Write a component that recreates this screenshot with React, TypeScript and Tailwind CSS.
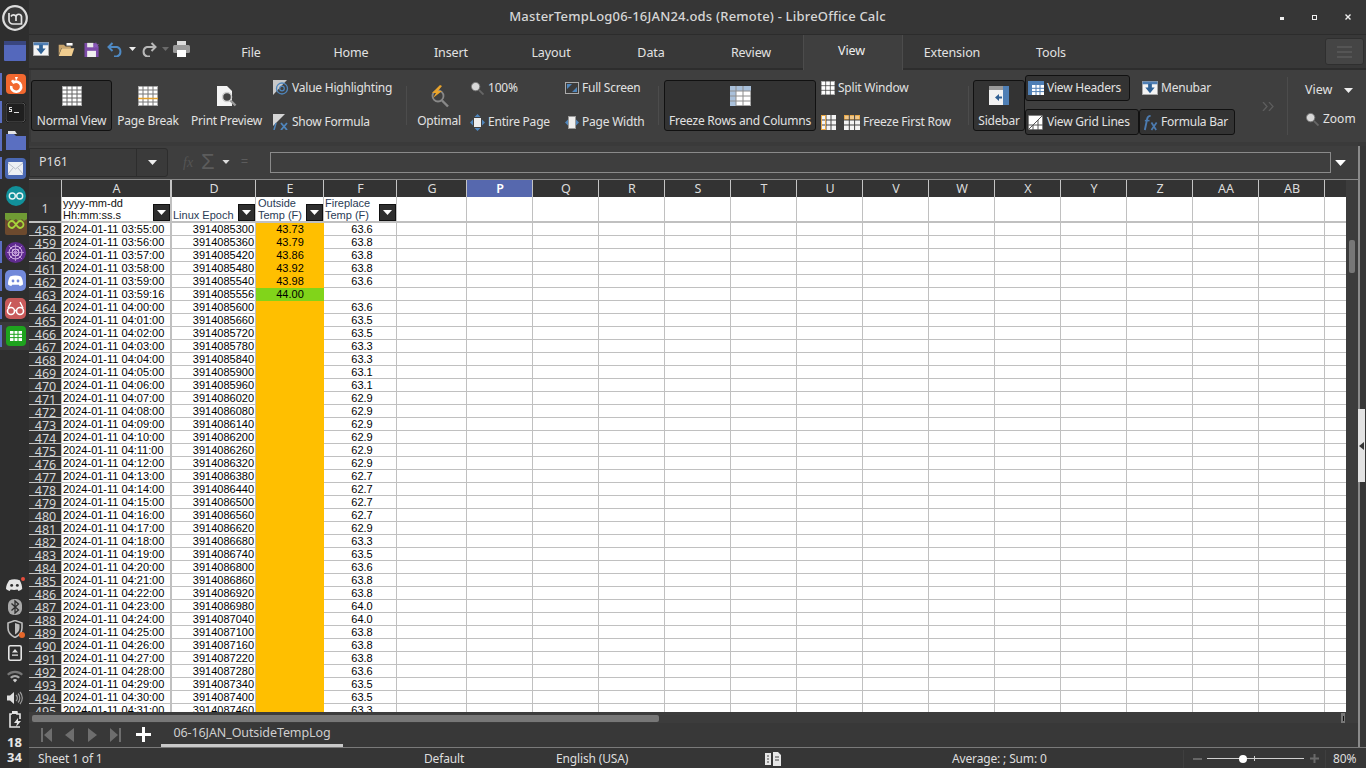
import React from "react";

const UI = "font-['Noto_Sans',sans-serif]";
const CELL = "font-['Liberation_Sans',sans-serif]";

const GridIcon = ({ s = 16, c = 5, r = 5, fill = "#fff", line = "#555", className = "" }: any) => (
  <svg width={s} height={s} viewBox="0 0 20 20" className={className}>
    <rect x="0.5" y="0.5" width="19" height="19" fill={fill} stroke="#aaa" />
    {Array.from({ length: c - 1 }).map((_, i) => (
      <line key={i} x1={((i + 1) * 20) / c} x2={((i + 1) * 20) / c} y1="0" y2="20" stroke={line} />
    ))}
    {Array.from({ length: r - 1 }).map((_, i) => (
      <line key={i} y1={((i + 1) * 20) / r} y2={((i + 1) * 20) / r} x1="0" x2="20" stroke={line} />
    ))}
  </svg>
);

const Caret = ({ c = "#eee", w = 9, h = 5 }: any) => (
  <svg width={w} height={h} viewBox="0 0 9 5" className="shrink-0">
    <path d="M0 0h9L4.5 5z" fill={c} />
  </svg>
);

const MenubarIcon = ({ s = 16, h = 14 }: any) => (
  <svg width={s} height={h} viewBox="0 0 17 15" className="shrink-0">
    <rect x="0.5" y="0.5" width="16" height="14" fill="#f4f4f4" stroke="#aaa" />
    <rect x="0.5" y="0.5" width="16" height="3" fill="#4f7fb5" />
    <path d="M6.5 3v4H3.5l5 6 5-6h-3V3z" fill="#2f6296" />
  </svg>
);

const FxIcon = ({ s = 20 }: any) => (
  <svg width={s} height={s} viewBox="0 0 18 18" className="shrink-0">
    <path d="M3 17 5.5 5c.4-2 1.5-3 3.6-3" fill="none" stroke="#4c7bb0" strokeWidth="2" />
    <path d="M3 7h5" stroke="#4c7bb0" strokeWidth="1.6" />
    <path d="M10 9l5 8M15.5 9l-5.5 8" stroke="#4c7bb0" strokeWidth="1.8" />
  </svg>
);

const SmallMag = ({ s = 15 }: any) => (
  <svg width={s} height={s} viewBox="0 0 15 15" className="shrink-0">
    <circle cx="6" cy="6" r="4.5" fill="#d8d8d8" stroke="#777" />
    <path d="M9.5 9.5l5 5" stroke="#666" strokeWidth="2" />
  </svg>
);

const LABEL = "text-[12px] tracking-[-0.22px] whitespace-nowrap text-[#e2e2e2]";

function Big({ w, ml = 0, label, icon, boxed = false }: any) {
  return (
    <div
      style={{ width: w, marginLeft: ml }}
      className={`shrink-0 mt-[10px] h-[51px] flex flex-col items-center rounded-[3px] ${
        boxed ? "bg-[#333333] border border-[#111111]" : "border border-transparent"
      }`}
    >
      <div className="h-[29px] flex items-center justify-center">{icon}</div>
      <span className={`${LABEL} leading-[16px] mt-[3px]`}>{label}</span>
    </div>
  );
}

function Small({ icon, label, boxed = false, w, iconW = 19 }: any) {
  return (
    <div
      style={w ? { width: w } : undefined}
      className={`h-[26px] flex items-center rounded-[3px] shrink-0 ${
        boxed ? "bg-[#333333] border border-[#111111] pl-[2px]" : "border border-transparent"
      }`}
    >
      <span style={{ width: iconW }} className="shrink-0 flex items-center">
        {icon}
      </span>
      <span className={LABEL}>{label}</span>
    </div>
  );
}

const Sep = ({ ml }: any) => <div style={{ marginLeft: ml }} className="w-px h-[39px] mt-[16px] bg-[#4c4c4c] shrink-0" />;

function SmallCol({ ml = 0, w, children }: any) {
  return (
    <div style={{ marginLeft: ml, width: w }} className="shrink-0 mt-[5px] flex flex-col gap-[8px]">
      {children}
    </div>
  );
}

const colDefs = [
  ["A", 110],
  ["D", 84],
  ["E", 68],
  ["F", 73],
  ["G", 70],
  ["P", 66],
  ["Q", 66],
  ["R", 66],
  ["S", 66],
  ["T", 66],
  ["U", 66],
  ["V", 66],
  ["W", 66],
  ["X", 66],
  ["Y", 66],
  ["Z", 66],
  ["AA", 66],
  ["AB", 66],
] as [string, number][];

const times = ["03:55:00","03:56:00","03:57:00","03:58:00","03:59:00","03:59:16","04:00:00","04:01:00","04:02:00","04:03:00","04:04:00","04:05:00","04:06:00","04:07:00","04:08:00","04:09:00","04:10:00","04:11:00","04:12:00","04:13:00","04:14:00","04:15:00","04:16:00","04:17:00","04:18:00","04:19:00","04:20:00","04:21:00","04:22:00","04:23:00","04:24:00","04:25:00","04:26:00","04:27:00","04:28:00","04:29:00","04:30:00","04:31:00"];
const epochs = [85300,85360,85420,85480,85540,85556,85600,85660,85720,85780,85840,85900,85960,86020,86080,86140,86200,86260,86320,86380,86440,86500,86560,86620,86680,86740,86800,86860,86920,86980,87040,87100,87160,87220,87280,87340,87400,87460];
const outside = ["43.73","43.79","43.86","43.92","43.98","44.00"];
const fire = ["63.6","63.8","63.8","63.8","63.6","","63.6","63.5","63.5","63.3","63.3","63.1","63.1","62.9","62.9","62.9","62.9","62.9","62.9","62.7","62.7","62.7","62.7","62.9","63.3","63.5","63.6","63.8","63.8","64.0","64.0","63.8","63.8","63.8","63.6","63.5","63.5","63.3"];

const Filter = () => (
  <span className="absolute right-0 bottom-0 w-[17px] h-[17px] bg-[#2e2e2e] border border-[#111] flex items-center justify-center">
    <Caret c="#fff" w={9} h={5} />
  </span>
);

function Row({ i }: { i: number }) {
  const n = 458 + i;
  const blank = colDefs.slice(4);
  const green = i === 5;
  return (
    <div className={`flex h-[13px] ${CELL} text-[11px] leading-[12px] text-black`}>
      <div className={`${UI} w-[33px] shrink-0 h-[13px] overflow-hidden bg-[#343434] text-[12.5px] leading-[13px] pt-[1px] text-[#d5d5d5] text-center border-b border-b-[#c4c4c4] border-r border-r-[#c4c4c4] pl-[1px]`}>
        {n}
      </div>
      <div className="w-[110px] shrink-0 border-b border-r-[2px] border-[#c0c0c0] pl-[1px] whitespace-nowrap overflow-hidden">
        2024-01-11 {times[i]}
      </div>
      <div className="w-[84px] shrink-0 border-b border-r border-[#c0c0c0] text-right pr-[1px]">39140{epochs[i]}</div>
      <div className={`w-[68px] shrink-0 text-center ${green ? "bg-[#81d41a]" : "bg-[#ffbf00]"}`}>{outside[i] ?? ""}</div>
      <div className="w-[73px] shrink-0 border-b border-r border-[#c0c0c0] text-center pl-[4px]">{fire[i]}</div>
      {blank.map(([k, w]) => (
        <div key={k} style={{ width: w }} className="shrink-0 border-b border-r border-[#c0c0c0]" />
      ))}
      <div className="w-[21px] shrink-0 border-b border-[#c0c0c0]" />
    </div>
  );
}

const DockSlot = ({ active, children, h = 28 }: any) => (
  <div style={{ height: h }} className="w-full flex items-center justify-center relative pl-[2px]">
    {active && <span className="absolute left-0 top-[3px] bottom-[3px] w-[2px] bg-[#5b6fc2]" />}
    {children}
  </div>
);

function Dock() {
  return (
    <aside className={`${UI} w-[29px] shrink-0 h-[768px] bg-[#2e2e2e] flex flex-col items-center overflow-hidden`}>
      <div className="h-[34px] flex items-center justify-center pt-[1px]">
        <svg width="26" height="26" viewBox="0 0 26 26">
          <circle cx="13" cy="13" r="11.800" fill="#3a3a3a" stroke="#dcdcdc" strokeWidth="2.200" />
          <path d="M7 8v7a4 4 0 0 0 4 4h8.500v-7.500a2.800 2.800 0 0 0-5.500 0v4.500m0-4.500a2.800 2.800 0 0 0-5 0" fill="none" stroke="#e4e4e4" strokeWidth="1.700" />
        </svg>
      </div>
      <div className="h-[33px] flex items-center justify-center">
        <svg width="22" height="20" viewBox="0 0 22 20">
          <rect width="22" height="20" rx="1" fill="#5468bc" />
          <rect width="22" height="4" fill="#39467f" />
        </svg>
      </div>
      <div className="h-[3px]" />
      <DockSlot active>
        <svg width="20" height="20" viewBox="0 0 20 20">
          <rect width="20" height="20" rx="4" fill="#f2682f" />
          <path d="M6 6.200l1.600 2.200A5 5 0 1 1 5.200 12" fill="none" stroke="#fff" strokeWidth="2.600" />
          <path d="M9 3h3l-2 4z" fill="#fff" />
        </svg>
      </DockSlot>
      <DockSlot active>
        <svg width="21" height="21" viewBox="0 0 21 21">
          <rect x="0.500" y="0.500" width="20" height="20" rx="4" fill="#1f1f1f" stroke="#000" />
          <rect x="1" y="1" width="19" height="19" rx="3" fill="none" stroke="#555" />
          <path d="M4 5h3v1H5v1h2v3H4V9h2V8H4zM9 10h5v1H9z" fill="#ddd" />
        </svg>
      </DockSlot>
      <DockSlot active>
        <svg width="22" height="19" viewBox="0 0 22 19">
          <path d="M1 3h8l2 2h10v14H1z" fill="#5a6fc1" />
          <path d="M3 0h7l2 3H3z" fill="#e4e4e4" />
        </svg>
      </DockSlot>
      <DockSlot active>
        <svg width="21" height="21" viewBox="0 0 21 21">
          <rect width="21" height="21" rx="4" fill="#4a68b3" />
          <rect x="3" y="4" width="15" height="13" rx="1" fill="#eceff4" />
          <path d="M3 5l7.500 6L18 5M3 16l5-6M18 16l-5-6" fill="none" stroke="#b9bec9" />
        </svg>
      </DockSlot>
      <DockSlot>
        <svg width="20" height="20" viewBox="0 0 20 20">
          <circle cx="10" cy="10" r="10" fill="#11909a" />
          <circle cx="6.300" cy="10" r="3" fill="none" stroke="#e8f4f4" strokeWidth="1.400" />
          <circle cx="13.700" cy="10" r="3" fill="none" stroke="#e8f4f4" strokeWidth="1.400" />
        </svg>
      </DockSlot>
      <DockSlot>
        <svg width="22" height="22" viewBox="0 0 22 22">
          <rect width="22" height="22" rx="2" fill="#6d4a2e" />
          <path d="M0 0h22v6l-3 2-2-2-3 3-3-3-3 2-3-2-2 2-3-2z" fill="#6f9b34" />
          <path d="M7 8a3.500 3.500 0 1 0 0 7c3 0 5-7 8-7a3.500 3.500 0 1 1 0 7C12 15 10 8 7 8z" fill="none" stroke="#a7d43c" strokeWidth="1.800" />
        </svg>
      </DockSlot>
      <DockSlot active>
        <svg width="21" height="21" viewBox="0 0 21 21">
          <circle cx="10.500" cy="10.500" r="10.500" fill="#5f2b8f" />
          <circle cx="10.500" cy="10.500" r="6.500" fill="none" stroke="#d7b7e8" />
          <circle cx="10.500" cy="10.500" r="3.500" fill="none" stroke="#e5d0ef" />
          <path d="M4 4l13 13M17 4 4 17M10.500 2v17M2 10.500h17" stroke="#c79ddc" strokeWidth="0.800" />
        </svg>
      </DockSlot>
      <DockSlot active>
        <svg width="21" height="21" viewBox="0 0 21 21">
          <rect width="21" height="21" rx="5" fill="#7289da" />
          <path d="M5 6.500c3.500-1.500 7.500-1.500 11 0 1.500 2.500 2 5 2 8-1 .8-2.200 1.300-3.300 1.500l-.9-1.300H7.200l-.9 1.300C5.200 15.800 4 15.300 3 14.500c0-3 .5-5.500 2-8z" fill="#fff" />
          <circle cx="8" cy="11" r="1.400" fill="#7289da" />
          <circle cx="13" cy="11" r="1.400" fill="#7289da" />
        </svg>
      </DockSlot>
      <DockSlot active>
        <svg width="21" height="21" viewBox="0 0 21 21">
          <rect width="21" height="21" rx="5" fill="#c95a5a" />
          <circle cx="6" cy="13" r="3.500" fill="none" stroke="#fff" strokeWidth="1.600" />
          <circle cx="15" cy="13" r="3.500" fill="none" stroke="#fff" strokeWidth="1.600" />
          <path d="M9.500 12.500h2M3 10l3-6M18 10l-3-6" stroke="#fff" strokeWidth="1.400" />
        </svg>
      </DockSlot>
      <div className="w-full bg-[#3a3a3a]">
        <DockSlot active>
          <svg width="20" height="20" viewBox="0 0 20 20">
            <rect width="20" height="20" rx="4" fill="#1ea31e" />
            <rect x="4" y="5" width="12" height="10" fill="#fff" />
            <path d="M4 8.300h12M4 11.600h12M8 5v10M12 5v10" stroke="#1ea31e" />
          </svg>
        </DockSlot>
      </div>
      <div className="flex-1" />
      <div className="flex flex-col items-center">
        <div className="h-[23px] flex items-center justify-center relative">
          <svg width="17" height="14" viewBox="0 0 21 16">
            <path d="M4 2c3.800-1.600 9.200-1.600 13 0 2 3.500 3 7 3 11-1.400 1.200-3 2-4.600 2.300l-1.100-1.800c-3.200.7-5.400.7-8.600 0l-1.100 1.800C3 15 1.400 14.200 0 13c0-4 1.500-7.500 4-11z" fill="#e4e4e4" />
            <circle cx="7" cy="8.500" r="1.800" fill="#2e2e2e" />
            <circle cx="14" cy="8.500" r="1.800" fill="#2e2e2e" />
          </svg>
          <span className="absolute top-[4px] right-[-2px] w-[4px] h-[4px] rounded-full bg-[#e74c3c]" />
        </div>
        <div className="h-[22px] flex items-center justify-center">
          <svg width="14" height="16" viewBox="0 0 14 16">
            <rect width="14" height="16" rx="6" fill="#a9a9a9" />
            <path d="M3.500 4.500l7 6.500L7 14V2l3.500 3-7 6.500" fill="none" stroke="#2e2e2e" strokeWidth="1.300" />
          </svg>
        </div>
        <div className="h-[22px] flex items-center justify-center relative">
          <svg width="16" height="18" viewBox="0 0 16 18">
            <path d="M8 0.500l7 2.500v5c0 4.500-3 7.500-7 9.500-4-2-7-5-7-9.500V3z" fill="none" stroke="#bdbdbd" strokeWidth="1.600" />
            <path d="M8 3l4.500 1.500V8c0 3-2 5-4.500 6.500z" fill="#bdbdbd" />
          </svg>
          <span className="absolute bottom-[2px] right-[-2px] w-[6px] h-[6px] rounded-full bg-[#e6672a]" />
        </div>
        <div className="h-[25px] flex items-center justify-center">
          <svg width="14" height="16" viewBox="0 0 14 16">
            <rect x="0.800" y="0.800" width="12.400" height="14.400" rx="1.500" fill="none" stroke="#e4e4e4" strokeWidth="1.600" />
            <path d="M7 4l3 3.500H4zM4 9.500h6v1.300H4z" fill="#e4e4e4" />
          </svg>
        </div>
        <div className="h-[23px] flex items-center justify-center">
          <svg width="16" height="13" viewBox="0 0 16 13">
            <path d="M0 4a11.500 11.500 0 0 1 16 0l-1.500 1.600a9.500 9.500 0 0 0-13 0z" fill="#777" />
            <path d="M3 7a7.500 7.500 0 0 1 10 0l-1.500 1.500a5.300 5.300 0 0 0-7 0z" fill="#a8a8a8" />
            <path d="M5.800 10a3.500 3.500 0 0 1 4.400 0L8 12.500z" fill="#cfcfcf" />
          </svg>
        </div>
        <div className="h-[20px] flex items-center justify-center">
          <svg width="16" height="14" viewBox="0 0 16 14">
            <path d="M0 4.500h3L7 1v12L3 9.500H0z" fill="#dedede" />
            <path d="M9 4a4 4 0 0 1 0 6M11 2.500a6.500 6.500 0 0 1 0 9M13 1a9 9 0 0 1 0 12" fill="none" stroke="#9d9d9d" strokeWidth="1.200" />
          </svg>
        </div>
        <div className="h-[22px] flex items-center justify-center">
          <svg width="14" height="18" viewBox="0 0 14 18">
            <path d="M4 2h5v2h3v5M12 17H2V4h2" fill="none" stroke="#e4e4e4" strokeWidth="1.600" />
            <path d="M4 1h5v3H4z" fill="#e4e4e4" />
            <path d="M10 8l-4 5h3l-1 4 5-6h-3z" fill="#e4e4e4" />
          </svg>
        </div>
        <div className="h-[15px] text-[13px] font-bold leading-[15px] text-[#e6e6e6] mt-[5px]">18</div>
        <div className="h-[15px] text-[13px] font-bold leading-[15px] text-[#e6e6e6] mb-[3px]">34</div>
      </div>
    </aside>
  );
}

const tabWidths: Record<string, string> = {
  File: "w-[100px]",
  Home: "w-[100px]",
  Insert: "w-[100px]",
  Layout: "w-[100px]",
  Data: "w-[100px]",
  Review: "w-[102px] pr-[2px]",
  View: "w-[100px]",
  Extension: "w-[98px]",
  Tools: "w-[100px]",
};
const tabs = Object.keys(tabWidths);

function TabBar() {
  return (
    <div className="h-[36px] flex bg-[#383838] border-t border-[#2c2c2c] border-b-[2px] border-b-[#2d2d2d] items-stretch">
      <div className="w-[172px] shrink-0 flex items-center pl-[4px] pb-[5px]">
        <MenubarIcon />
        <svg width="17" height="13" viewBox="0 0 18 15" className="ml-[9px] shrink-0">
          <path d="M0 2h6l2 2h6v2H3L0 14z" fill="#c8a46c" />
          <path d="M3.500 6H18l-3 9H0z" fill="#f0cd8f" />
          <path d="M9 0h7v3H9z" fill="#fff" />
        </svg>
        <svg width="16" height="15" viewBox="0 0 17 17" className="ml-[9px] shrink-0">
          <path d="M0 1h12l4 4v12H0z" fill="#7c4aa8" />
          <rect x="3" y="1" width="7" height="5" fill="#e8e8e8" />
          <rect x="3" y="10" width="10" height="7" fill="#f0f0f0" />
          <path d="M13 0l1 2.500 2.500.2-2 1.700.7 2.600-2.200-1.400-2.200 1.400.7-2.600-2-1.700 2.500-.2z" fill="#8a5bb8" />
        </svg>
        <svg width="17" height="15" viewBox="0 0 17 15" className="ml-[7px] shrink-0">
          <path d="M5.500 1 1.500 5l4 4" fill="none" stroke="#4f8ac4" strokeWidth="2" />
          <path d="M2 5h8a5 5 0 0 1 0 9.500H7" fill="none" stroke="#4f8ac4" strokeWidth="2" />
        </svg>
        <span className="ml-[5px]"><Caret c="#eee" w={7} h={4} /></span>
        <svg width="17" height="15" viewBox="0 0 17 15" className="ml-[4px] shrink-0">
          <path d="M11.500 1l4 4-4 4" fill="none" stroke="#b8b8b8" strokeWidth="2" />
          <path d="M15 5H7a5 5 0 0 0 0 9.500h3" fill="none" stroke="#b8b8b8" strokeWidth="2" />
        </svg>
        <span className="ml-[5px]"><Caret c="#6a6a6a" w={7} h={4} /></span>
        <svg width="17" height="16" viewBox="0 0 17 16" className="ml-[4px] shrink-0">
          <rect x="4" y="0" width="9" height="4" fill="#ddd" />
          <rect x="0" y="4" width="17" height="8" rx="1.500" fill="#9a9a9a" />
          <rect x="4" y="9" width="9" height="7" fill="#fff" />
        </svg>
      </div>
      {tabs.map((t) => (
        <div
          key={t}
          className={`${tabWidths[t]} shrink-0 flex items-center justify-center text-[12.5px] tracking-[-0.1px] ${
            t === "View"
              ? "bg-[#3f3f3f] text-[#efefef] border-l border-r border-[#4c4c4c] -mb-[2px] pb-[3px] pr-[3px]"
              : "text-[#e2e2e2] pt-[3px]"
          }`}
        >
          {t}
        </div>
      ))}
      <div className="flex-1" />
      <div className="w-[39px] h-[27px] mt-[3px] mr-[2px] rounded-[3px] bg-[#454545] border border-[#2f2f2f] flex flex-col items-center justify-center gap-[3px]">
        <span className="w-[15px] h-[2px] bg-[#555]" />
        <span className="w-[15px] h-[2px] bg-[#555]" />
        <span className="w-[15px] h-[2px] bg-[#555]" />
      </div>
    </div>
  );
}

function Ribbon() {
  return (
    <div className="h-[72px] flex bg-[#3f3f3f] ml-[2px] overflow-hidden">
      <Big w={81} label="Normal View" boxed icon={<GridIcon s={20} c={4} r={5} line="#666" />} />
      <Big
        w={72}
        label="Page Break"
        icon={
          <svg width="20" height="20" viewBox="0 0 20 20">
            <rect x="0.500" y="0.500" width="19" height="19" fill="#fff" stroke="#aaa" />
            <path d="M5 0v20M10 0v20M15 0v20M0 4h20M0 8h20M0 16h20" stroke="#777" />
            <path d="M0 12.500h20" stroke="#e0a030" strokeWidth="1.500" />
          </svg>
        }
      />
      <Big
        w={85}
        label="Print Preview"
        icon={
          <svg width="22" height="22" viewBox="0 0 22 22">
            <path d="M1 1h10l5 5v15H1z" fill="#f4f4f4" />
            <circle cx="11" cy="12" r="4.500" fill="#444" stroke="#cfcfcf" strokeWidth="1.500" />
            <path d="M14.500 15.500l5 5" stroke="#999" strokeWidth="2.400" />
          </svg>
        }
      />
      <SmallCol ml={3} w={127}>
        <Small
          label="Value Highlighting"
          icon={
            <svg width="16" height="16" viewBox="0 0 16 16">
              <path d="M0 0h14L0 15z" fill="#c9c9c9" />
              <circle cx="9" cy="8.500" r="5.500" fill="none" stroke="#4f86bd" strokeWidth="1.300" />
              <circle cx="9" cy="8.500" r="2.300" fill="none" stroke="#4f86bd" strokeWidth="1.200" />
            </svg>
          }
        />
        <Small
          label="Show Formula"
          icon={
            <svg width="16" height="16" viewBox="0 0 16 16">
              <path d="M0 0h12L0 12z" fill="#d5d5d5" />
              <path d="M1 16l2-7" stroke="#4f86bd" strokeWidth="1.500" />
              <path d="M8 9l6 7M14 9l-6 7" stroke="#4f86bd" strokeWidth="1.800" />
            </svg>
          }
        />
      </SmallCol>
      <Sep ml={7} />
      <Big
        w={52}
        ml={6}
        label="Optimal"
        icon={
          <svg width="22" height="24" viewBox="0 0 22 24">
            <circle cx="10" cy="12" r="5.500" fill="none" stroke="#888" strokeWidth="1.800" />
            <path d="M14 16.500l6 6" stroke="#888" strokeWidth="2.400" />
            <path d="M12 1 4 9h4l-3 5 9-7h-4l4-5z" fill="#e8a32c" />
          </svg>
        }
      />
      <SmallCol ml={4} w={94}>
        <Small label="100%" iconW={18} icon={<SmallMag s={14} />} />
        <Small
          label="Entire Page"
          iconW={18}
          icon={
            <svg width="15" height="17" viewBox="0 0 15 17">
              <rect x="4" y="4" width="7" height="9" fill="#eee" />
              <path d="M7.500 0l3 3h-6zM7.500 17l3-3h-6zM0 8.500l3-3v6zM15 8.500l-3-3v6z" fill="#4f86bd" />
            </svg>
          }
        />
      </SmallCol>
      <SmallCol ml={1} w={90}>
        <Small
          label="Full Screen"
          iconW={17}
          icon={
            <svg width="14" height="12" viewBox="0 0 14 12">
              <rect x="0.500" y="0.500" width="13" height="11" fill="#3b3b3b" stroke="#aaa" />
              <path d="M2 2h5L2 7zM12 10H7l5-5z" fill="#4f86bd" />
            </svg>
          }
        />
        <Small
          label="Page Width"
          iconW={17}
          icon={
            <svg width="14" height="13" viewBox="0 0 14 13">
              <rect x="3.500" y="0.500" width="7" height="12" fill="#eee" stroke="#999" />
              <path d="M0 6.500l3-3v6zM14 6.500l-3-3v6z" fill="#4f86bd" />
            </svg>
          }
        />
      </SmallCol>
      <Sep ml={4} />
      <Big
        w={152}
        ml={5}
        label="Freeze Rows and Columns"
        boxed
        icon={
          <svg width="21" height="20" viewBox="0 0 21 20">
            <rect x="0.500" y="0.500" width="20" height="19" fill="#fff" stroke="#aaa" />
            <path d="M0 0h21v5H6v15H0z" fill="#a9c0da" />
            <path d="M6 0v20M13 0v20M0 5h21M0 10h21M0 15h21" stroke="#8c8c8c" />
          </svg>
        }
      />
      <SmallCol ml={4} w={148}>
        <Small label="Split Window" iconW={17} icon={<GridIcon s={14} c={3} r={3} line="#333" />} />
        <div className="h-[26px] flex items-center border border-transparent">
          <svg width="15" height="15" viewBox="0 0 15 15" className="shrink-0">
            <rect width="15" height="15" fill="#f4f4f4" />
            <path d="M5 0v15M10 0v15M0 5h15M0 10h15" stroke="#444" />
            <rect x="0.500" y="0.500" width="4" height="14" fill="none" stroke="#e8a848" />
          </svg>
          <svg width="16" height="15" viewBox="0 0 16 15" className="ml-[8px] mr-[3px] shrink-0">
            <rect width="16" height="15" fill="#f4f4f4" />
            <rect x="0.500" y="0.500" width="15" height="4" fill="#f0c78a" stroke="#e8a848" />
            <path d="M5.300 0v15M10.600 0v15M0 5h16M0 10h16" stroke="#444" />
          </svg>
          <span className={LABEL}>Freeze First Row</span>
        </div>
      </SmallCol>
      <Sep ml={0} />
      <Big
        w={52}
        ml={4}
        boxed
        label="Sidebar"
        icon={
          <svg width="20" height="19" viewBox="0 0 20 19">
            <rect width="20" height="19" fill="#f2f2f2" />
            <rect width="14" height="4" fill="#9a9a9a" />
            <rect x="14" width="6" height="19" fill="#4f7fb5" />
            <path d="M13 8v2.500h-3V8l-4 3.500 4 3.500v-2.500h3V15" fill="#2f5f93" />
          </svg>
        }
      />
      <div className="w-[210px] shrink-0 mt-[5px] flex flex-col gap-[8px]">
        <div className="flex">
          <Small
            boxed
            w={105}
            iconW={19}
            label="View Headers"
            icon={
              <svg width="16" height="14" viewBox="0 0 16 14">
                <rect width="16" height="14" fill="#4f7fb5" />
                <rect x="4" y="4" width="12" height="10" fill="#fff" />
                <path d="M8 4v10M12 4v10M4 7.300h12M4 10.600h12" stroke="#4f7fb5" />
              </svg>
            }
          />
          <div className="ml-[12px] h-[26px] flex items-center gap-[3px]">
            <MenubarIcon s={16} h={14} />
            <span className={LABEL}>Menubar</span>
          </div>
        </div>
        <div className="flex">
          <Small
            boxed
            w={114}
            iconW={19}
            label="View Grid Lines"
            icon={
              <svg width="15" height="15" viewBox="0 0 15 15">
                <rect x="0.500" y="0.500" width="14" height="14" fill="#fff" stroke="#666" strokeDasharray="1 1" />
                <path d="M0 15 15 0M5 15V10M10 15V5M0 10h15" stroke="#555" />
              </svg>
            }
          />
          <Small boxed w={96} iconW={19} label="Formula Bar" icon={<FxIcon s={17} />} />
        </div>
      </div>
      <svg width="12" height="9" viewBox="0 0 12 9" className="ml-[27px] mt-[32px] shrink-0">
        <path d="M1 0l4 4.500L1 9M7 0l4 4.500L7 9" fill="none" stroke="#5e5e5e" strokeWidth="1.300" />
      </svg>
      <div className="w-px h-[58px] mt-[7px] ml-[13px] bg-[#4c4c4c] shrink-0" />
      <div className="ml-[17px] flex flex-col shrink-0 w-[60px]">
        <div className="h-[26px] mt-[7px] flex items-center text-[12.5px] text-[#e2e2e2]">
          View
          <span className="ml-[12px]"><Caret c="#eee" /></span>
        </div>
        <div className="h-[26px] mt-[3px] flex items-center text-[12px] text-[#e2e2e2]">
          <SmallMag s={14} />
          <span className="ml-[4px]">Zoom</span>
        </div>
      </div>
    </div>
  );
}

function FormulaBar() {
  return (
    <div className="h-[34px] flex items-center bg-[#3e3e3e] border-b border-[#8a8a8a]">
      <div className="w-[139px] h-[29px] -mt-[1px] flex items-stretch bg-[#3a3a3a] border border-[#2d2d2d] rounded-r-[3px] shrink-0">
        <div className="w-[107px] flex items-center pl-[9px] pt-[1px] text-[12.5px] text-[#dedede] border-r border-[#2d2d2d]">P161</div>
        <div className="flex-1 flex items-center justify-center">
          <Caret c="#eee" />
        </div>
      </div>
      <div className="w-[102px] shrink-0 flex items-center pl-[15px] -mt-[1px]">
        <span className="font-['Liberation_Serif',serif] italic text-[14px] text-[#555]">fx</span>
        <span className={`${CELL} ml-[8px] text-[22px] leading-[18px] text-[#5c5c5c]`}>Σ</span>
        <span className="ml-[7px]"><Caret c="#ddd" w={8} h={4} /></span>
        <span className="ml-[11px] text-[13px] text-[#5c5c5c]">=</span>
      </div>
      <div className="w-[1061px] h-[21px] -mt-[1px] border border-[#8a8a8a] bg-[#3e3e3e] shrink-0" />
      <span className="ml-[4px]"><Caret c="#fff" w={11} h={6} /></span>
    </div>
  );
}

function Sheet() {
  return (
    <div className="h-[532px] flex flex-col overflow-hidden bg-white">
      <div className="h-[17px] flex bg-[#333333] shrink-0 text-[12.5px] leading-[17px] text-[#dcdcdc]">
        <div className="w-[33px] shrink-0 border-r border-[#c4c4c4]" />
        {colDefs.map(([k, w]) => (
          <div
            key={k}
            style={{ width: w }}
            className={`shrink-0 text-center pl-[1px] border-r ${k === "A" ? "border-r-[2px]" : ""} border-[#c4c4c4] ${
              k === "P" ? "bg-[#5668ae] text-white font-semibold" : ""
            }`}
          >
            {k}
          </div>
        ))}
        <div className="w-[21px] shrink-0" />
      </div>
      <div className={`flex h-[26px] shrink-0 border-b-[2px] border-[#c0c0c0] ${CELL} text-[11px] leading-[12px] text-[#111]`}>
        <div className={`${UI} w-[33px] shrink-0 bg-[#343434] border-r border-[#c4c4c4] text-[12.5px] text-[#d5d5d5] flex items-center justify-center`}>1</div>
        <div className="w-[110px] shrink-0 border-r-[2px] border-[#c0c0c0] relative pl-[1px]">
          yyyy-mm-dd<br />Hh:mm:ss.s
          <Filter />
        </div>
        <div className="w-[84px] shrink-0 border-r border-[#c0c0c0] relative pl-[1px] pt-[12px] whitespace-nowrap text-[#2a3b55]">
          Linux Epoch
          <Filter />
        </div>
        <div className="w-[68px] shrink-0 border-r border-[#c0c0c0] relative pl-[2px] text-[#2a3b55]">
          Outside<br />Temp (F)
          <Filter />
        </div>
        <div className="w-[73px] shrink-0 border-r border-[#c0c0c0] relative pl-[1px] text-[#2a3b55]">
          Fireplace<br />Temp (F)
          <Filter />
        </div>
        {colDefs.slice(4).map(([k, w]) => (
          <div key={k} style={{ width: w }} className="shrink-0 border-r border-[#c0c0c0]" />
        ))}
      </div>
      <div className="flex-1 overflow-hidden">
        {times.map((_, i) => (
          <Row key={i} i={i} />
        ))}
      </div>
    </div>
  );
}

const NavIcon = ({ d }: { d: string }) => (
  <svg width="13" height="16" viewBox="0 0 13 16" className="shrink-0">
    <path d={d} fill="#6e6e6e" />
  </svg>
);

function SheetTabs() {
  return (
    <div className="h-[24px] flex bg-[#383838] items-stretch">
      <div className="ml-[11px] w-[97px] shrink-0 flex items-center gap-[10px]">
        <NavIcon d="M1 1h2v14H1zM12 1v14L4 8z" />
        <NavIcon d="M11 1v14L2 8z" />
        <NavIcon d="M2 1v14l9-7z" />
        <NavIcon d="M1 1v14l8-7zM10 1h2v14h-2z" />
      </div>
      <svg width="15" height="15" viewBox="0 0 15 15" className="shrink-0 mt-[4px] -ml-[1px]">
        <path d="M6 0h3v6h6v3H9v6H6V9H0V6h6z" fill="#fff" />
      </svg>
      <div className="ml-[10px] w-[182px] shrink-0 border-b-[3px] border-[#c9c9c9] flex items-center justify-center text-[12.5px] tracking-[-0.1px] text-[#cfcfcf]">
        06-16JAN_OutsideTempLog
      </div>
    </div>
  );
}

function StatusBar() {
  return (
    <div className="h-[21px] flex items-center bg-[#363636] border-t border-[#7a7a7a] text-[12px] tracking-[-0.15px] text-[#dedede] whitespace-nowrap pt-[1px]">
      <span className="ml-[9px] w-[386px] shrink-0">Sheet 1 of 1</span>
      <span className="w-[132px] shrink-0">Default</span>
      <span className="w-[209px] shrink-0">English (USA)</span>
      <svg width="16" height="14" viewBox="0 0 16 14" className="shrink-0">
        <path d="M0 1h6v12H0zM8 0h5l3 3v11H8z" fill="#e6e6e6" />
        <path d="M2 4h2M2 7h2M2 10h2M10 5h4M10 8h4" stroke="#444" />
      </svg>
      <span className="ml-[171px] w-[231px] shrink-0">Average: ; Sum: 0</span>
      <span className="w-px h-[18px] bg-[#3f3f3f] shrink-0 mr-[9px]" />
      <span className="w-[9px] h-[2px] bg-[#666] shrink-0" />
      <div className="ml-[5px] w-[97px] h-[1px] bg-[#d0d0d0] relative shrink-0">
        <span className="absolute left-[32px] -top-[3.5px] w-[8px] h-[8px] rounded-full bg-white" />
        <span className="absolute left-[47px] -top-[2px] w-[1px] h-[5px] bg-[#d0d0d0]" />
      </div>
      <svg width="9" height="9" viewBox="0 0 9 9" className="ml-[6px] shrink-0">
        <path d="M3.500 0h2v3.500H9v2H5.500V9h-2V5.500H0v-2h3.500z" fill="#6a6a6a" />
      </svg>
      <span className="w-px h-[18px] bg-[#3f3f3f] shrink-0 ml-[6px]" />
      <span className="ml-[7px]">80%</span>
    </div>
  );
}

export default function App() {
  return (
    <div className={`${UI} w-[1366px] h-[768px] flex overflow-hidden bg-[#383838]`}>
      <Dock />
      <div className="w-[1337px] shrink-0 flex flex-col">
        <div className="h-[34px] flex items-center bg-[#363636] relative">
          <div className="w-full text-center text-[13px] font-medium tracking-[0.2px] text-[#d6d6d6]">
            MasterTempLog06-16JAN24.ods (Remote) - LibreOffice Calc
          </div>
          <div className="absolute right-[15px] top-[14px] flex items-center gap-[28px]">
            <span className="w-[4px] h-[3px] bg-[#eee] mt-[2px]" />
            <span className="w-[5px] h-[5px] border border-[#eee]" />
            <svg width="6" height="6" viewBox="0 0 6 6">
              <path d="M.5.5l5 5M5.500.5l-5 5" stroke="#eee" strokeWidth="1.400" />
            </svg>
          </div>
        </div>
        <TabBar />
        <Ribbon />
        <div className="h-[605px] flex">
          <div className="w-[1329px] shrink-0 flex flex-col">
            <div className="h-[4px] bg-[#3a3a3a]" />
            <FormulaBar />
            <div className="h-[532px] overflow-hidden flex">
              <div className="w-[1317px] shrink-0">
                <Sheet />
              </div>
              <div className="flex-1 bg-[#3c3c3c] pl-[3px] pt-[60px]">
                <div className="w-[6px] h-[33px] rounded-[2px] bg-[#777]" />
              </div>
            </div>
            <div className="h-[11px] bg-[#3c3c3c] flex items-center pl-[3px] pt-[1px]">
              <div className="w-[627px] h-[7px] rounded-[2px] bg-[#777]" />
              <div className="ml-[682px] w-[4px] h-[10px] bg-[#777] flex items-center justify-center">
                <span className="w-px h-[5px] bg-[#111]" />
              </div>
            </div>
            <SheetTabs />
          </div>
          <div className="flex-1 mt-[4px] bg-[#363636] border-l-[2px] border-[#8a8a8a] pt-[263px]">
            <div className="w-[7px] h-[73px] -ml-[2px] bg-[#e2e2e2] flex items-center justify-center">
              <svg width="5" height="8" viewBox="0 0 5 8"><path d="M5 0v8L0 4z" fill="#333" /></svg>
            </div>
          </div>
        </div>
        <StatusBar />
      </div>
    </div>
  );
}
